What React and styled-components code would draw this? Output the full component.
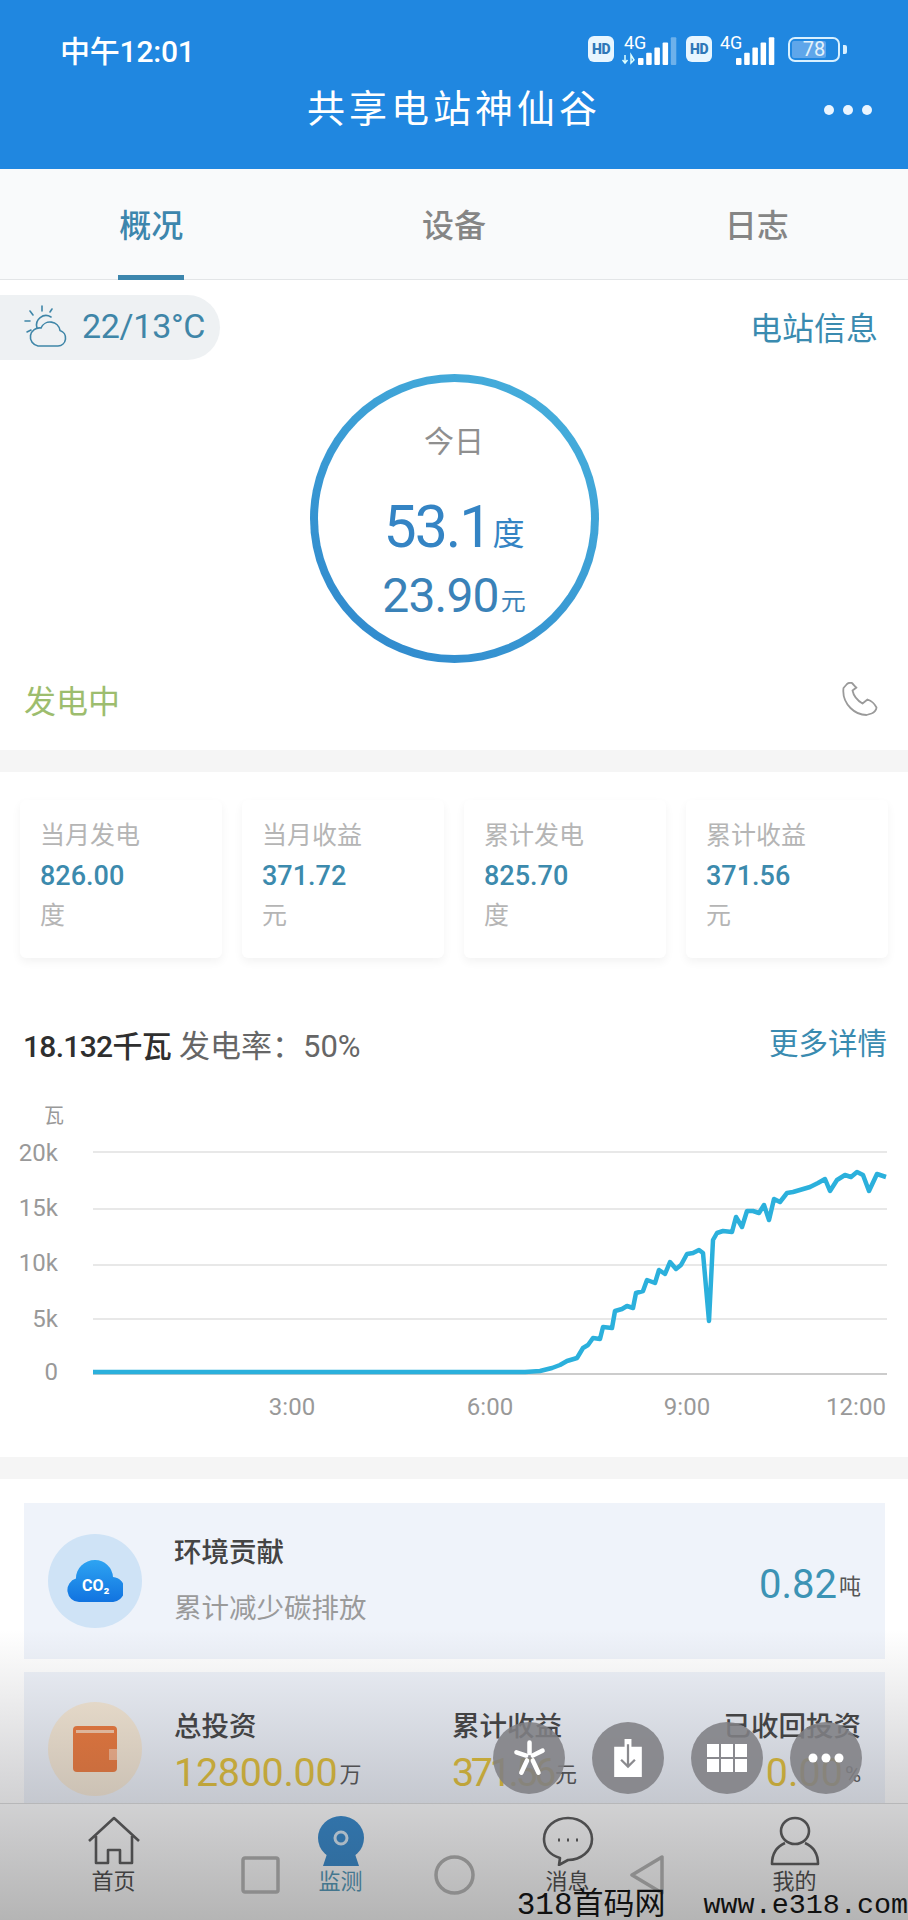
import styled, { createGlobalStyle } from "styled-components";

const GlobalStyle = createGlobalStyle`
  html, body { margin: 0; padding: 0; background: #fff; }
  body { font-family: Roboto, "Noto Sans CJK SC", sans-serif; }
  * { box-sizing: border-box; }
`;

const Page = styled.div`
  position: relative;
  width: 908px;
  height: 1920px;
  overflow: hidden;
  display: flex;
  flex-direction: column;
  background: #fff;
`;

const Header = styled.header`
  height: 169px;
  flex: none;
  background: #2087e0;
  color: #fff;
  padding: 29px 32px 0 60px;
`;

const StatusBar = styled.div`
  display: flex;
  align-items: center;
  justify-content: space-between;
  height: 40px;
  padding-right: 30px;
`;

const Clock = styled.span`
  font-size: 30px;
  letter-spacing: -0.2px;
  font-weight: 500;
`;

const StatusIcons = styled.div`
  display: flex;
  align-items: center;
  gap: 8px;
`;

const HdBadge = styled.span`
  width: 26px;
  height: 26px;
  border-radius: 6px;
  background: #e8f6ff;
  color: #2f78b8;
  font-size: 14px;
  font-weight: 900;
  display: flex;
  align-items: center;
  justify-content: center;
  letter-spacing: -0.5px;
`;

const Battery = styled.div`
  position: relative;
  width: 52px;
  height: 25px;
  margin-left: 4px;
  margin-right: 6px;
  border: 2.5px solid #d8f0ff;
  border-radius: 7px;
  padding: 2px;
  font-size: 20px;
  line-height: 17px;
  text-align: center;
  color: #e4f2fb;

  &::before {
    content: "";
    position: absolute;
    left: 2px;
    top: 2px;
    bottom: 2px;
    width: 70%;
    background: #5fa6ea;
    border-radius: 2px;
  }
  &::after {
    content: "";
    position: absolute;
    right: -9px;
    top: 6px;
    width: 4px;
    height: 9px;
    background: #d8f0ff;
    border-radius: 0 2px 2px 0;
  }
`;

const BatteryValue = styled.span`
  position: relative;
`;

const TitleBar = styled.div`
  position: relative;
  margin-top: 6px;
  margin-left: -60px;
  margin-right: -32px;
  height: 60px;
  display: flex;
  align-items: center;
  justify-content: center;
  font-size: 38px;
  letter-spacing: 4px;
`;

const MoreDots = styled.div`
  position: absolute;
  right: 36px;
  top: 30px;
  display: flex;
  gap: 9px;
`;

const MoreDot = styled.i`
  width: 10px;
  height: 10px;
  border-radius: 50%;
  background: #eaf5ff;
`;

const Tabs = styled.nav`
  flex: none;
  height: 111px;
  display: grid;
  grid-template-columns: repeat(3, 1fr);
  background: #f9fafb;
  border-bottom: 1px solid #e3e5e7;
`;

const Tab = styled.div`
  display: flex;
  justify-content: center;
`;

const TabLabel = styled.span`
  width: 66px;
  height: 111px;
  line-height: 114px;
  text-align: center;
  font-size: 32px;
  font-weight: 500;
  white-space: nowrap;
  color: ${(p) => (p.$active ? "#3d86ad" : "#858585")};
  border-bottom: 5px solid ${(p) => (p.$active ? "#3d86ad" : "transparent")};
`;

const Body = styled.main`
  flex: 1;
  min-height: 0;
  overflow: hidden;
  background: #f5f5f5;
  display: flex;
  flex-direction: column;
  gap: 22px;
`;

const Section = styled.section`
  background: #fff;
  flex: none;
`;

const WeatherRow = styled.div`
  display: flex;
  align-items: center;
  justify-content: space-between;
  padding: 15px 30px 0 0;
`;

const WeatherPill = styled.div`
  display: flex;
  align-items: center;
  gap: 14px;
  width: 220px;
  height: 65px;
  padding: 0 0 4px 24px;
  background: #eef1f3;
  border-radius: 0 33px 33px 0;
  font-size: 34px;
  letter-spacing: -0.3px;
  color: #3f86a8;
  white-space: nowrap;
`;

const LinkText = styled.span`
  font-size: ${(p) => p.$size || 32}px;
  color: #3a8bb0;
  white-space: nowrap;
  padding-bottom: 4px;
`;

const Ring = styled.div`
  width: 289px;
  height: 289px;
  margin: 14px auto 0;
  border: 8px solid transparent;
  border-radius: 50%;
  background:
    linear-gradient(#fff, #fff) padding-box,
    linear-gradient(215deg, #48b2dd, #2e86cc) border-box;
  display: flex;
  flex-direction: column;
  align-items: center;
  padding-top: 40px;
`;

const RingLabel = styled.div`
  font-size: 30px;
  line-height: 40px;
  color: #8f8f8f;
`;

const RingEnergy = styled.div`
  margin-top: 35px;
  line-height: 60px;
  font-size: 59px;
  letter-spacing: -2px;
  color: #3484c4;
  white-space: nowrap;
`;

const RingMoney = styled.div`
  margin-top: 5px;
  line-height: 50px;
  font-size: 48px;
  letter-spacing: -0.8px;
  color: #3a82b8;
  white-space: nowrap;
`;

const RingUnit = styled.span`
  font-size: ${(p) => p.$size}px;
  letter-spacing: 0;
  margin-left: 2px;
  position: relative;
  top: -2px;
`;

const StateRow = styled.div`
  display: flex;
  align-items: center;
  justify-content: space-between;
  height: 44px;
  margin-top: 14px;
  padding: 0 30px 0 24px;
  margin-bottom: 29px;
  color: #9dbd6e;
  font-size: 32px;
`;

const StatGrid = styled.div`
  display: grid;
  grid-template-columns: repeat(4, 1fr);
  gap: 20px;
  padding: 28px 20px 0 20px;
`;

const StatCard = styled.div`
  height: 158px;
  padding: 16px 0 0 20px;
  border-radius: 6px;
  background: #fff;
  box-shadow: 0 4px 10px rgba(0, 0, 0, 0.05);
`;

const StatLabel = styled.div`
  font-size: 25px;
  line-height: 40px;
  color: #b5b5b5;
`;

const StatValue = styled.div`
  font-size: 27px;
  line-height: 40px;
  font-weight: 500;
  color: #3c8aad;
`;

const PowerRow = styled.div`
  height: 44px;
  margin-top: 63px;
  margin-bottom: 2px;
  padding: 0 21px 0 23px;
  display: flex;
  align-items: center;
  justify-content: space-between;
`;

const PowerText = styled.div`
  font-size: 31px;
  color: #666;
  white-space: nowrap;
`;

const PowerStrong = styled.span`
  font-size: 30px;
  letter-spacing: -0.7px;
  color: #2f2f2f;
  font-weight: 500;
  margin-right: 8px;
`;

const ChartSvg = styled.svg`
  display: block;
  width: 908px;
  height: 390px;
  font-family: Roboto, "Noto Sans CJK SC", sans-serif;
  font-size: 24px;
  fill: #999;
`;

const InfoList = styled.div`
  padding: 24px 23px 0 24px;
  display: flex;
  flex-direction: column;
  gap: 13px;
  height: 460px;
`;

const InfoCard = styled.div`
  flex: none;
  height: ${(p) => p.$height}px;
  background: #eff3fa;
  display: flex;
  align-items: ${(p) => p.$align || "center"};
  padding: ${(p) => p.$pad || "0 24px"};
  gap: 32px;
`;

const IconDisc = styled.div`
  flex: none;
  width: 94px;
  height: 94px;
  border-radius: 50%;
  background: ${(p) => p.$bg};
  display: flex;
  align-items: center;
  justify-content: center;
`;

const InfoText = styled.div`
  flex: 1;
  min-width: 0;
`;

const InfoTitle = styled.div`
  font-size: 27.5px;
  line-height: 40px;
  color: #444;
  font-weight: 500;
  white-space: nowrap;
`;

const InfoSub = styled.div`
  margin-top: 16px;
  font-size: 27.5px;
  line-height: 40px;
  color: #9a9a9a;
  white-space: nowrap;
`;

const CarbonValue = styled.div`
  font-size: 40px;
  color: #3c93b5;
  white-space: nowrap;
  margin-top: 6px;
`;

const SmallUnit = styled.span`
  font-size: 22px;
  letter-spacing: 0;
  color: #555;
  margin-left: 2px;
  position: relative;
  top: -4px;
`;

const InvestGrid = styled.div`
  flex: 1;
  display: grid;
  grid-template-columns: 278px 1fr auto;
  margin-top: 5px;
`;

const InvestCell = styled.div`
  text-align: ${(p) => (p.$right ? "right" : "left")};
`;

const InvestValue = styled.div`
  margin-top: 6px;
  font-size: 39.5px;
  line-height: 40px;
  letter-spacing: ${(p) => p.$spacing}px;
  color: #e2c038;
  white-space: nowrap;
`;

const BottomNav = styled.nav`
  flex: none;
  height: 117px;
  background: #fff;
  border-top: 1px solid #ddd;
  display: grid;
  grid-template-columns: repeat(4, 1fr);
  padding-top: 12px;
`;

const NavItem = styled.div`
  display: flex;
  flex-direction: column;
  align-items: center;
  font-size: 22px;
  line-height: 32px;
  color: ${(p) => (p.$active ? "#4b96b8" : "#444")};
`;

const NavIcon = styled.svg`
  width: 56px;
  height: 50px;
  display: block;
`;

const Shade = styled.div`
  position: absolute;
  left: 0;
  right: 0;
  top: 1630px;
  bottom: 0;
  pointer-events: none;
  background: linear-gradient(
    rgba(60, 60, 70, 0),
    rgba(60, 60, 70, 0.2) 50%,
    rgba(50, 50, 50, 0.36) 100%
  );
`;

const FloatBar = styled.div`
  position: absolute;
  left: 493px;
  top: 1722px;
  display: flex;
  gap: 27px;
`;

const FloatButton = styled.div`
  width: 72px;
  height: 72px;
  border-radius: 50%;
  background: rgba(128, 128, 132, 0.88);
  display: flex;
  align-items: center;
  justify-content: center;
`;

const SystemKeys = styled.div`
  position: absolute;
  left: 241px;
  top: 1855px;
  display: flex;
  align-items: center;
  gap: 154px;
`;

const Watermark = styled.div`
  position: absolute;
  right: 0;
  bottom: 0;
  display: flex;
  align-items: center;
  gap: 38px;
  font-family: "Liberation Mono", "Noto Sans CJK SC", monospace;
  font-size: 28.4px;
  line-height: 28px;
  color: #111;
  white-space: nowrap;
`;

const WatermarkName = styled.span`
  font-size: 31px;
`;

const Signal = ({ arrows, dim }) => (
  <svg width={56} height={40} viewBox="0 -6 56 40" fill="#fff">
    {arrows && <path d="M3 20v8M0.5 25l2.5 3 2.5-3M9 20v8l3-3z" stroke="#dff" strokeWidth="1.5" fill="none" />}
    <text x={arrows ? 2 : 0} y={14} fontSize={18} fontFamily="Roboto">4G</text>
    {[0, 1, 2, 3, 4].map((i) => (
      <rect
        key={i}
        x={16 + i * 8.2}
        y={30 - (7 + i * 5.2)}
        width={5.5}
        height={7 + i * 5.2}
        rx={1}
        opacity={dim && i === 4 ? 0.35 : 1}
      />
    ))}
  </svg>
);

const WeatherIcon = () => (
  <svg width={44} height={44} viewBox="0 0 44 44" fill="none" stroke="#3f86a8" strokeWidth="1.6" strokeLinecap="round">
    <path d="M13 24a9.5 9.5 0 0 1 14-11" />
    <path d="M18 2v5M6 7l3 4M1 17h5M3 28l4-2M28 5l-2 3" />
    <path d="M14 42h20a8 8 0 0 0 2-15.6A10 10 0 0 0 17 24a9 9 0 0 0-3 18z" />
  </svg>
);

const PhoneIcon = () => (
  <svg width={36} height={34} viewBox="0 0 36 34" fill="none" stroke="#9a9a9a" strokeWidth="1.8" strokeLinejoin="round">
    <path d="M5 2 1.5 6c-1 8 2 15 7 20 4 4 10 7 16 7l5-1.500c3-1 5-4 5-6-2-4-6-7-9-8l-5 4c-5-3-9-8-10-13l4-3C14 6 12 3 10 1 8 0.500 6 1 5 2z" />
  </svg>
);

const points = [
  [93, 1372], [525, 1372], [540, 1371], [552, 1368], [560, 1365], [567, 1361], [577, 1358], [583, 1348],
  [588, 1345], [593, 1338], [600, 1339], [603, 1327], [612, 1328], [615, 1311], [622, 1309], [627, 1306],
  [633, 1308], [636, 1293], [643, 1291], [647, 1280], [655, 1283], [659, 1270], [665, 1274], [670, 1262],
  [676, 1269], [681, 1265], [687, 1254], [693, 1253], [699, 1250], [703, 1253], [709, 1321], [713, 1240],
  [717, 1233], [723, 1231], [732, 1232], [736, 1217], [742, 1227], [747, 1211], [753, 1211], [759, 1213],
  [764, 1205], [769, 1220], [774, 1199], [780, 1202], [787, 1193], [793, 1192], [810, 1187], [818, 1183],
  [825, 1179], [830, 1191], [837, 1180], [845, 1175], [851, 1177], [857, 1172], [863, 1175], [869, 1191],
  [877, 1174], [886, 1177],
];

const Chart = () => (
  <ChartSvg viewBox="0 1067 908 390">
    <text x={44} y={1123} fontSize={20}>瓦</text>
    {[
      ["20k", 1152, 1153],
      ["15k", 1209, 1208],
      ["10k", 1265, 1263],
      ["5k", 1319, 1319],
    ].map(([label, y, ty]) => (
      <g key={label}>
        <line x1={93} x2={887} y1={y} y2={y} stroke="#e8e8e8" strokeWidth={2} />
        <text x={58} y={ty} textAnchor="end" dominantBaseline="central">{label}</text>
      </g>
    ))}
    <text x={58} y={1372} textAnchor="end" dominantBaseline="central">0</text>
    <line x1={93} x2={887} y1={1374} y2={1374} stroke="#ccc" strokeWidth={2} />
    {[["3:00", 292], ["6:00", 490], ["9:00", 687], ["12:00", 856]].map(([label, x]) => (
      <text key={label} x={x} y={1407} textAnchor="middle" dominantBaseline="central">{label}</text>
    ))}
    <polyline
      points={points.map((p) => p.join(",")).join(" ")}
      fill="none"
      stroke="#2bb0dc"
      strokeWidth={4.5}
      strokeLinejoin="round"
    />
  </ChartSvg>
);

const stats = [
  ["当月发电", "826.00", "度"],
  ["当月收益", "371.72", "元"],
  ["累计发电", "825.70", "度"],
  ["累计收益", "371.56", "元"],
];

const invest = [
  ["总投资", "12800.00", "万", -0.3],
  ["累计收益", "371.56", "元", -3.4],
  ["已收回投资", "0.00", "%", 0],
];

export default function App() {
  return (
    <Page>
      <GlobalStyle />
      <Header>
        <StatusBar>
          <Clock>中午12:01</Clock>
          <StatusIcons>
            <HdBadge>HD</HdBadge>
            <Signal arrows dim />
            <HdBadge>HD</HdBadge>
            <Signal />
            <Battery><BatteryValue>78</BatteryValue></Battery>
          </StatusIcons>
        </StatusBar>
        <TitleBar>
          共享电站神仙谷
          <MoreDots><MoreDot /><MoreDot /><MoreDot /></MoreDots>
        </TitleBar>
      </Header>

      <Tabs>
        <Tab><TabLabel $active>概况</TabLabel></Tab>
        <Tab><TabLabel>设备</TabLabel></Tab>
        <Tab><TabLabel>日志</TabLabel></Tab>
      </Tabs>

      <Body>
        <Section>
          <WeatherRow>
            <WeatherPill><WeatherIcon />22/13°C</WeatherPill>
            <LinkText>电站信息</LinkText>
          </WeatherRow>
          <Ring>
            <RingLabel>今日</RingLabel>
            <RingEnergy>53.1<RingUnit $size={32}>度</RingUnit></RingEnergy>
            <RingMoney>23.90<RingUnit $size={25}>元</RingUnit></RingMoney>
          </Ring>
          <StateRow>
            发电中
            <PhoneIcon />
          </StateRow>
        </Section>

        <Section>
          <StatGrid>
            {stats.map(([label, value, unit]) => (
              <StatCard key={label}>
                <StatLabel>{label}</StatLabel>
                <StatValue>{value}</StatValue>
                <StatLabel>{unit}</StatLabel>
              </StatCard>
            ))}
          </StatGrid>
          <PowerRow>
            <PowerText><PowerStrong>18.132千瓦</PowerStrong>发电率：50%</PowerText>
            <LinkText $size={29.5}>更多详情</LinkText>
          </PowerRow>
          <Chart />
        </Section>

        <Section>
          <InfoList>
            <InfoCard $height={156}>
              <IconDisc $bg="#cfe3f6">
                <svg width={56} height={42} viewBox="0 0 56 42">
                  <defs>
                    <linearGradient id="cloud" x1="0" y1="0" x2="0" y2="1">
                      <stop offset="0" stopColor="#2ea4f2" />
                      <stop offset="1" stopColor="#1173e0" />
                    </linearGradient>
                  </defs>
                  <path d="M12 42A12 12 0 0 1 9 18.500 19 18 0 0 1 28 0a18 18 0 0 1 18 17 12.500 12.500 0 0 1-2 25z" fill="url(#cloud)" />
                  <text x={15} y={31} fontSize={16} fontWeight={700} fill="#fff" fontFamily="Roboto">CO₂</text>
                </svg>
              </IconDisc>
              <InfoText>
                <InfoTitle>环境贡献</InfoTitle>
                <InfoSub>累计减少碳排放</InfoSub>
              </InfoText>
              <CarbonValue>0.82<SmallUnit>吨</SmallUnit></CarbonValue>
            </InfoCard>

            <InfoCard $height={240} $align="flex-start" $pad="30px 24px 0">
              <IconDisc $bg="#f6e9d6">
                <svg width={44} height={46} viewBox="0 0 44 46">
                  <rect x={0} y={0} width={44} height={46} rx={4} fill="#ee7a3c" />
                  <rect x={3} y={4} width={38} height={3} fill="#f7c8a8" />
                  <rect x={36} y={23} width={8} height={11} fill="#f8b48c" />
                </svg>
              </IconDisc>
              <InvestGrid>
                {invest.map(([label, value, unit, spacing], i) => (
                  <InvestCell key={label} $right={i === 2}>
                    <InfoTitle>{label}</InfoTitle>
                    <InvestValue $spacing={spacing}>{value}<SmallUnit>{unit}</SmallUnit></InvestValue>
                  </InvestCell>
                ))}
              </InvestGrid>
            </InfoCard>
          </InfoList>
        </Section>
      </Body>

      <BottomNav>
        <NavItem>
          <NavIcon viewBox="0 0 56 50" fill="none" stroke="#555" strokeWidth="2.6" strokeLinejoin="round">
            <path d="M3 25 28 2l25 23M10 20v27h12V34h12v13h12V20" />
          </NavIcon>
          首页
        </NavItem>
        <NavItem $active>
          <NavIcon viewBox="0 0 56 50">
            <ellipse cx={28} cy={22} rx={23} ry={22} fill="#2f86cc" />
            <path d="M14 38h28l4 12H10z" fill="#2f86cc" />
            <circle cx={28} cy={22} r={6} fill="none" stroke="#d8eaf7" strokeWidth={3} />
          </NavIcon>
          监测
        </NavItem>
        <NavItem>
          <NavIcon viewBox="0 0 56 50" fill="none" stroke="#555" strokeWidth="2.6" strokeLinejoin="round">
            <path d="M28 2c13 0 24 9 24 21S41 44 28 44l-9 5 1-7C10 39 4 32 4 23 4 11 15 2 28 2z" />
            <path d="M18 24h2M27 24h2M36 24h2" strokeWidth="3" />
          </NavIcon>
          消息
        </NavItem>
        <NavItem>
          <NavIcon viewBox="0 0 56 50" fill="none" stroke="#555" strokeWidth="2.6" strokeLinejoin="round">
            <ellipse cx={28} cy={15} rx={14} ry={13} />
            <path d="M18 27C9 31 5 38 5 48h46c0-10-4-17-13-21" />
          </NavIcon>
          我的
        </NavItem>
      </BottomNav>

      <Shade />

      <FloatBar>
        <FloatButton>
          <svg width={35} height={36} viewBox="0 0 40 44" fill="none" stroke="#fff" strokeWidth="5.500" strokeLinecap="round">
            <path d="M20 3v13M4 15l12 4M36 13l-12 6M17 25l-7 15M24 25l7 15" />
          </svg>
        </FloatButton>
        <FloatButton>
          <svg width={32} height={38} viewBox="0 0 34 44">
            <path d="M1 9h12V0h8v9h12v35H1z" fill="#fff" />
            <path d="M17 6v26M9 24l8 8 8-8" fill="none" stroke="#8a8a8e" strokeWidth="2.600" />
          </svg>
        </FloatButton>
        <FloatButton>
          <svg width={40} height={28} viewBox="0 0 40 28" fill="#fff">
            {[0, 14, 28].flatMap((x) =>
              [0, 15].map((y) => <rect key={`${x}-${y}`} x={x} y={y} width={12} height={13} />)
            )}
          </svg>
        </FloatButton>
        <FloatButton>
          <svg width={36} height={10} viewBox="0 0 36 10" fill="#fff">
            <circle cx={5} cy={5} r={4.500} />
            <circle cx={18} cy={5} r={4.500} />
            <circle cx={31} cy={5} r={4.500} />
          </svg>
        </FloatButton>
      </FloatBar>

      <SystemKeys>
        <svg width={39} height={38} viewBox="0 0 39 38" fill="none" stroke="#8c8c8c" strokeWidth="3.5">
          <rect x={2} y={2} width={35} height={34} rx={2} />
        </svg>
        <svg width={41} height={40} viewBox="0 0 41 40" fill="none" stroke="#8c8c8c" strokeWidth="3.5">
          <ellipse cx={20.5} cy={20} rx={18.5} ry={18} />
        </svg>
        <svg width={36} height={40} viewBox="0 0 36 40" fill="none" stroke="#8c8c8c" strokeWidth="3.5" strokeLinejoin="round">
          <path d="M33 2v36L3 20z" />
        </svg>
      </SystemKeys>

      <Watermark>
        <WatermarkName>318首码网</WatermarkName>
        <span>www.e318.com</span>
      </Watermark>
    </Page>
  );
}
